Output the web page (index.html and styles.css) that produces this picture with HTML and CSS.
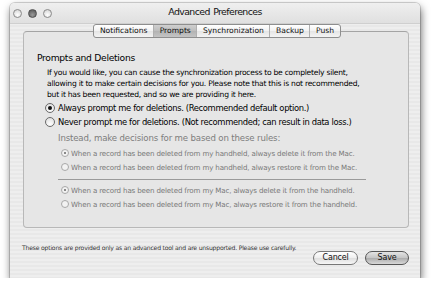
FILE: index.html
```html
<!DOCTYPE html>
<html>
<head>
<meta charset="utf-8">
<link rel="stylesheet" href="styles.css">
</head>
<body>
<div class="window">
  <div class="titlebar">
    <div class="lights">
      <span class="light"></span>
      <span class="light dark"></span>
      <span class="light"></span>
    </div>
    <div class="title">Advanced Preferences</div>
  </div>
  <div class="content">
    <div class="tabs">
      <span class="tab">Notifications</span>
      <span class="tab selected">Prompts</span>
      <span class="tab">Synchronization</span>
      <span class="tab">Backup</span>
      <span class="tab">Push</span>
    </div>
    <div class="group">
      <div class="heading">Prompts and Deletions</div>
      <p class="para">If you would like, you can cause the synchronization process to be completely silent,<br>allowing it to make certain decisions for you. Please note that this is not recommended,<br>but it has been requested, and so we are providing it here.</p>
      <div class="choices">
        <div class="radio"><span class="dot on"></span><span>Always prompt me for deletions. (Recommended default option.)</span></div>
        <div class="radio"><span class="dot"></span><span>Never prompt me for deletions. (Not recommended; can result in data loss.)</span></div>
      </div>
      <div class="instead">Instead, make decisions for me based on these rules:</div>
      <div class="subs">
        <div class="sub"><span class="sdot on"></span><span>When a record has been deleted from my handheld, always delete it from the Mac.</span></div>
        <div class="sub"><span class="sdot"></span><span>When a record has been deleted from my handheld, always restore it from the Mac.</span></div>
        <div class="sep"></div>
        <div class="sub"><span class="sdot on"></span><span>When a record has been deleted from my Mac, always delete it from the handheld.</span></div>
        <div class="sub"><span class="sdot"></span><span>When a record has been deleted from my Mac, always restore it from the handheld.</span></div>
      </div>
    </div>
    <div class="footer">
      <span class="note">These options are provided only as an advanced tool and are unsupported. Please use carefully.</span>
      <span class="btn cancel">Cancel</span>
      <span class="btn default">Save</span>
    </div>
  </div>
</div>
</body>
</html>
```

FILE: styles.css
```css
html, body {
  margin: 0;
  padding: 0;
  background: #ffffff;
}
body {
  font-family: "DejaVu Sans", sans-serif;
  color: #000;
  padding: 3px 0 0 10px;
  white-space: nowrap;
}
.window {
  width: 410px;
  height: 275px;
  border-radius: 5px 5px 0 0;
  background: repeating-linear-gradient(to bottom, #eeeeee 0px, #eeeeee 2px, #e8e8e8 2px, #e8e8e8 4px);
  box-shadow: 1px 4px 9px rgba(0,0,0,0.6), 0 0 0 1px rgba(0,0,0,0.15);
  display: flex;
  flex-direction: column;
  overflow: hidden;
}
.titlebar {
  height: 20px;
  display: flex;
  align-items: center;
  position: relative;
  background: linear-gradient(to bottom, #efefef, #e0e0e0);
  border-bottom: 1px solid #cfcfcf;
  flex: none;
}
.lights {
  display: flex;
  gap: 6px;
  padding-left: 3px;
}
.light {
  width: 7px;
  height: 7px;
  border-radius: 50%;
  border: 1px solid #8a8a8a;
  background: radial-gradient(circle at 50% 70%, #ffffff, #cfcfcf);
}
.light.dark {
  background: radial-gradient(circle at 50% 70%, #9a9a9a, #505050);
  border-color: #505050;
}
.title {
  position: absolute;
  left: 0;
  right: 0;
  top: 3px;
  text-align: center;
  font-size: 9.4px;
  letter-spacing: -0.6px;
  word-spacing: 1px;
  color: #111;
}
.content {
  display: flex;
  flex-direction: column;
  padding: 0 11px 0 13px;
}
.tabs {
  display: flex;
  justify-content: center;
  margin-top: 0px;
  position: relative;
  z-index: 1;
  align-self: center;
  margin-left: 2px;
  border: 1px solid #8e8e8e;
  border-radius: 3px;
  background: linear-gradient(to bottom, #ffffff, #f2f2f2 50%, #e4e4e4 50%, #f4f4f4);
  height: 12px;
}
.tab {
  font-size: 7.6px;
  line-height: 12px;
  padding: 0 5.6px;
  border-left: 1px solid #b0b0b0;
  color: #111;
}
.tab:first-child {
  border-left: none;
}
.tab.selected {
  background: linear-gradient(to bottom, #cfcfcf, #bdbdbd 50%, #b2b2b2 50%, #c4c4c4);
}
.group {
  margin-top: -7px;
  height: 197px;
  border: 1px solid #b8b8b8;
  border-top-color: #a4a4a4;
  border-radius: 4px;
  background: #e6e6e6;
  padding: 0 0 0 13px;
  box-sizing: border-box;
}
.heading {
  font-size: 9.2px;
  letter-spacing: -0.3px;
  margin-top: 19px;
  line-height: 13px;
}
.para {
  margin: 3px 0 0 10px;
  font-size: 7.6px;
  letter-spacing: -0.25px;
  line-height: 11px;
}
.choices {
  margin-top: 1px;
  margin-left: 8px;
}
.radio {
  display: flex;
  align-items: center;
  gap: 3px;
  font-size: 8.4px;
  letter-spacing: -0.35px;
  height: 14px;
}
.dot {
  width: 10px;
  height: 10px;
  border-radius: 50%;
  border: 1px solid #6a6a6a;
  box-sizing: border-box;
  background: radial-gradient(circle at 50% 75%, #ffffff, #dadada);
  display: flex;
  align-items: center;
  justify-content: center;
}
.dot.on::after {
  content: "";
  width: 4px;
  height: 4px;
  border-radius: 50%;
  background: #111;
}
.instead {
  margin: 2px 0 0 21px;
  font-size: 8.6px;
  letter-spacing: -0.15px;
  color: #7d7d7d;
  line-height: 14px;
}
.subs {
  margin: 1px 0 0 24px;
  width: 305px;
}
.sub {
  display: flex;
  align-items: center;
  gap: 2px;
  font-size: 7.1px;
  letter-spacing: -0.15px;
  color: #787878;
  height: 14px;
}
.sdot {
  width: 8px;
  height: 8px;
  border-radius: 50%;
  border: 1px solid #a8a8a8;
  box-sizing: border-box;
  background: #f2f2f2;
  display: flex;
  align-items: center;
  justify-content: center;
  flex: none;
}
.sdot.on::after {
  content: "";
  width: 2px;
  height: 2px;
  border-radius: 50%;
  background: #666;
}
.sep {
  height: 1px;
  background: #9a9a9a;
  margin: 5px 0 3px -3px;
}
.footer {
  display: flex;
  align-items: flex-start;
  margin-top: 16px;
  margin-left: -1px;
}
.note {
  font-size: 6.1px;
  letter-spacing: -0.2px;
  line-height: 8px;
  color: #333;
  flex: 1;
}
.btn {
  font-size: 8px;
  letter-spacing: -0.2px;
  height: 14px;
  line-height: 12px;
  margin-top: 7px;
  border-radius: 8px;
  border: 1px solid #777;
  box-sizing: border-box;
  text-align: center;
  background: linear-gradient(to bottom, #ffffff, #eeeeee 50%, #dedede 50%, #f6f6f6);
  color: #111;
}
.btn.cancel {
  width: 45px;
}
.btn.default {
  width: 44px;
  margin-left: 7px;
  background: linear-gradient(to bottom, #e4e4e4, #c4c4c4 50%, #ababab 50%, #d8d8d8);
  border-color: #555;
}
```
